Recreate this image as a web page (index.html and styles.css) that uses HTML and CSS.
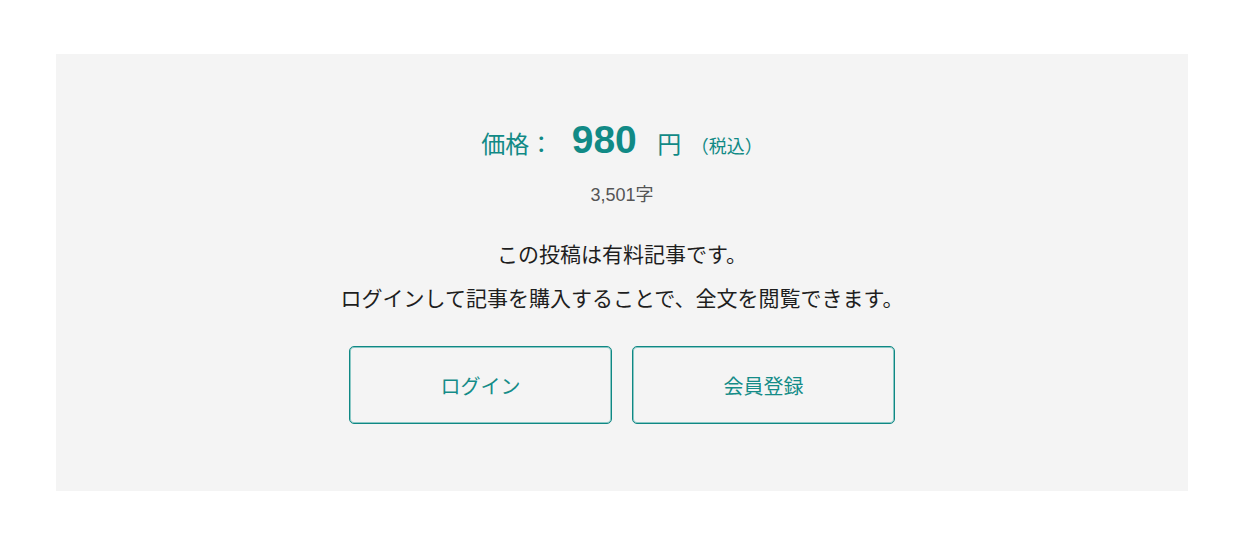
FILE: index.html
```html
<!DOCTYPE html>
<html lang="ja">
<head>
    <title>有料記事</title>
    <meta charset="UTF-8">
    <link rel="stylesheet" href="styles.css">
</head>
<body>
    <div class="paywall">
        <p class="price">
            <span class="price-label">価格：</span>
            <span class="price-value">980</span>
            <span class="price-unit">円</span>
            <span class="price-tax">（税込）</span>
        </p>
        <p class="chars">3,501字</p>

        <div class="message">
            <p>この投稿は有料記事です。</p>
            <p>ログインして記事を購入することで、全文を閲覧できます。</p>
        </div>

        <div class="buttons">
            <a class="btn" href="#">ログイン</a>
            <a class="btn" href="#">会員登録</a>
        </div>
    </div>
</body>
</html>
```

FILE: styles.css
```css
body {
    font-family: "Liberation Sans", "Noto Sans CJK JP", sans-serif;
    margin: 0;
    background: #fff;
    color: #222;
}

p {
    margin: 0;
}

.paywall {
    width: 1132px;
    margin: 54px 0 0 56px;
    padding: 66px 0 67px;
    background: #f4f4f4;
    text-align: center;
}

.price {
    height: 40px;
    line-height: 40px;
    color: #118a86;
}

.price-label {
    font-size: 24px;
}

.price-value {
    font-size: 39px;
    font-weight: bold;
    margin: 0 16px 0 14px;
}

.price-unit {
    font-size: 24px;
}

.price-tax {
    font-size: 18px;
    margin-left: 5px;
}

.chars {
    margin-top: 23px;
    font-size: 18px;
    line-height: 24px;
    color: #555;
}

.message {
    margin-top: 26px;
    font-size: 21px;
    line-height: 44px;
    color: #1e1e1e;
}

.buttons {
    display: flex;
    justify-content: center;
    gap: 20px;
    margin-top: 25px;
}

.btn {
    width: 261px;
    height: 76px;
    display: flex;
    align-items: center;
    justify-content: center;
    border: 1px solid #0f8884;
    border-radius: 5px;
    box-shadow: inset 0 0 0 1px #8ac8c5;
    color: #148c88;
    font-size: 20px;
    text-decoration: none;
}
```
